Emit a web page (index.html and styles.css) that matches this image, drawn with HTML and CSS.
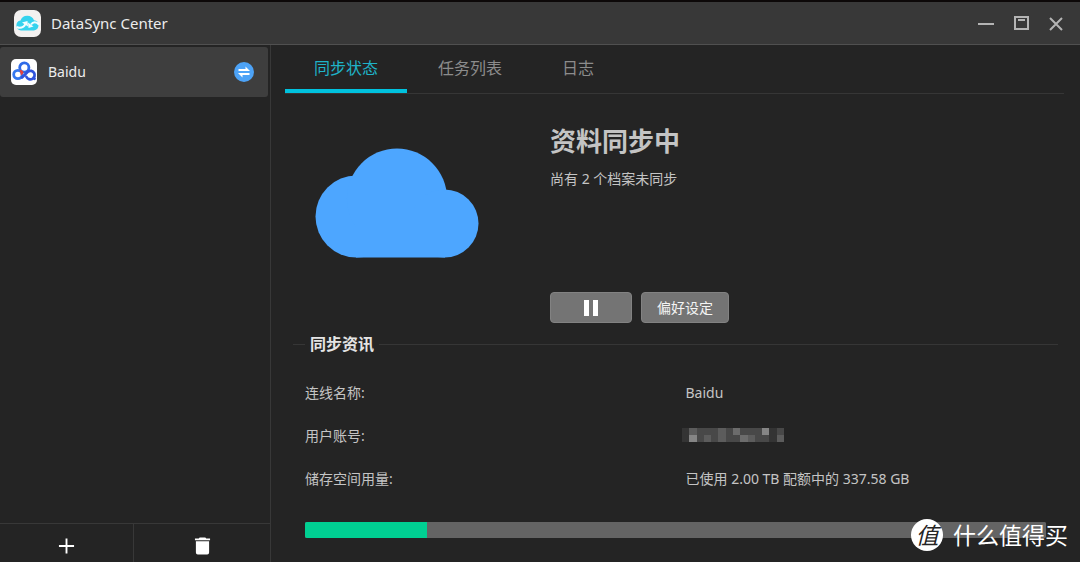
FILE: index.html
```html
<!DOCTYPE html>
<html lang="zh-CN">
<head>
<meta charset="utf-8">
<title>DataSync Center</title>
<link rel="stylesheet" href="styles.css">
</head>
<body>
<div class="window">
  <header class="titlebar">
    <svg class="app-icon" viewBox="0 0 27 27" aria-hidden="true">
      <rect width="27" height="27" rx="7" fill="#f3f1f0"/>
      <path d="M7 20.500a5 5 0 0 1-.5-9.900A7.200 7.200 0 0 1 20 10.200A5.200 5.200 0 0 1 20 20.500z" fill="#35d3ee"/>
      <path d="M2.500 17c3.500 1.500 7 .5 9-3" fill="none" stroke="#f3fdff" stroke-width="2"/>
      <path d="M8 12.500l5.500-1.500.5 5.500z" fill="#f3fdff"/>
      <path d="M25 14.500c-2.500-3-6-3-8 0" fill="none" stroke="#f3fdff" stroke-width="2"/>
      <path d="M14 12.500l.5 5.500 5-1.500z" fill="#f3fdff"/>
    </svg>
    <h1 class="app-title">DataSync Center</h1>
    <div class="window-controls">
      <button class="window-button" type="button" aria-label="Minimize"><svg viewBox="0 0 18 18"><path d="M1 10h16" stroke-width="2"/></svg></button>
      <button class="window-button" type="button" aria-label="Maximize"><svg viewBox="0 0 18 18"><path d="M3 3h13v12H3zM6 6h7" stroke-width="2"/></svg></button>
      <button class="window-button" type="button" aria-label="Close"><svg viewBox="0 0 18 18"><path d="M3 4l12 12M15 4L3 16" stroke-width="2"/></svg></button>
    </div>
  </header>

  <div class="body">
    <aside class="sidebar">
      <button class="connection" type="button">
        <svg class="connection-icon" viewBox="0 0 26 26" aria-hidden="true">
          <rect width="26" height="26" rx="5" fill="#fff"/>
          <g fill="none" stroke-width="2.800" stroke-linecap="round">
            <circle cx="13.300" cy="8.500" r="4.600" stroke="#2f6be8"/>
            <circle cx="6.900" cy="15.500" r="4.200" stroke="#3478ef"/>
            <path d="M15.500 18a4.300 4.300 0 1 0 1.500-5.500L11 18.500M22.500 18.500l1 1.200" stroke="#3053dc"/>
          </g>
          <path d="M8.600 10.800q3.500.5 4 2.700-1 2-2.600 3z" fill="#e8403c"/>
        </svg>
        <span class="connection-name">Baidu</span>
        <svg class="sync-badge" viewBox="0 0 20 20" aria-hidden="true">
          <circle cx="10" cy="10" r="10" fill="#4da3f7"/>
          <path d="M4.500 9h11.500L11.500 4.500V7h-7zM15.500 11H4l4.500 4.500V13h7z" fill="#fff"/>
        </svg>
      </button>
      <div class="sidebar-actions">
        <button class="sidebar-action" type="button" aria-label="新增"><svg viewBox="0 0 18 18"><path d="M8 1h2v7h7v2h-7v7H8v-7H1V8h7z"/></svg></button>
        <button class="sidebar-action" type="button" aria-label="删除"><svg viewBox="0 0 18 18"><path d="M1 1h4l1-1h6l1 1h4v2H1zM2 4h14v12q0 2-2 2H4q-2 0-2-2z"/></svg></button>
      </div>
    </aside>

    <main class="content">
      <nav class="tabs" role="tablist">
        <button class="tab tab-active" role="tab" aria-selected="true" type="button">同步状态</button>
        <button class="tab" role="tab" aria-selected="false" type="button">任务列表</button>
        <button class="tab" role="tab" aria-selected="false" type="button">日志</button>
      </nav>

      <section class="status">
        <svg class="cloud" viewBox="0 0 164 110" fill="#4da6ff" aria-hidden="true">
          <circle cx="41.500" cy="68.500" r="41"/>
          <circle cx="82" cy="50.500" r="50"/>
          <circle cx="129.500" cy="75.500" r="34"/>
          <path d="M41 60h89v49.500H41z"/>
        </svg>
        <div class="status-details">
          <h2 class="status-title">资料同步中</h2>
          <p class="status-text">尚有 2 个档案未同步</p>
          <div class="status-buttons">
            <button class="button button-pause" type="button" aria-label="暂停"><svg viewBox="0 0 14 16"><path d="M0 0h5v16H0zM9 0h5v16H9z"/></svg></button>
            <button class="button" type="button">偏好设定</button>
          </div>
        </div>
      </section>

      <fieldset class="info">
        <legend class="info-title">同步资讯</legend>
        <dl class="info-list">
          <dt>连线名称:</dt>
          <dd>Baidu</dd>
          <dt>用户账号:</dt>
          <dd>
            <svg class="masked" viewBox="0 0 14 2" preserveAspectRatio="none" shape-rendering="crispEdges" aria-hidden="true">
              <path fill="#484848" d="M0 0h14v2H0z"/>
              <path fill="#343434" d="M0 0h1v2H0zM12 0h1v2h-1z"/>
              <path fill="#5c5c5c" d="M1 0h1v1H1zM5 0h1v2H5zM3 1h1v1H3zM9 1h1v1H9zM13 1h1v1h-1z"/>
              <path fill="#6c6c6c" d="M7 0h1v1H7zM8 1h1v1H8z"/>
              <path fill="#858585" d="M1 1h1v1H1zM11 0h1v1h-1z"/>
            </svg>
          </dd>
          <dt>储存空间用量:</dt>
          <dd>已使用 2.00 TB 配额中的 337.58 GB</dd>
        </dl>
        <progress class="usage" max="2048" value="336" aria-label="储存空间用量"></progress>
      </fieldset>
    </main>
  </div>

  <div class="watermark">
    <span class="watermark-logo">值</span>
    <span>什么值得买</span>
  </div>
</div>
</body>
</html>
```
FILE: styles.css
```css
* {
  box-sizing: border-box;
}

body {
  margin: 0;
  background: #242424;
  color: #c4c4c4;
  font: 14px/20px "Noto Sans", "Noto Sans CJK SC", sans-serif;
}

button {
  margin: 0;
  padding: 0;
  border: 0;
  background: none;
  color: inherit;
  font: inherit;
}

.window {
  position: relative;
  display: flex;
  flex-direction: column;
  min-height: 100vh;
}

.titlebar {
  display: flex;
  align-items: center;
  height: 45px;
  padding: 0 15px 0 14px;
  border-top: 2px solid #0c0808;
  border-bottom: 1px solid #505050;
  background: #383838;
}

.app-icon {
  width: 27px;
  height: 27px;
}

.app-title {
  margin: 0 auto 0 10px;
  color: #ececec;
  font-size: 15px;
  font-weight: 400;
}

.window-controls {
  display: flex;
  gap: 17px;
}

.window-button {
  display: flex;
}

.window-button svg {
  width: 18px;
  height: 18px;
  fill: none;
  stroke: #b4b4b4;
}

.body {
  display: flex;
  flex: 1;
}

.sidebar {
  display: flex;
  flex-direction: column;
  flex: none;
  width: 271px;
  border-right: 1px solid #383838;
}

.connection {
  display: flex;
  align-items: center;
  height: 50px;
  margin: 2px 2px 0 0;
  padding: 0 14px 0 11px;
  border-radius: 3px;
  background: #3e3e3e;
}

.connection-icon {
  width: 26px;
  height: 26px;
}

.connection-name {
  margin: 0 auto 0 11px;
  color: #ececec;
  font-size: 14px;
}

.sync-badge {
  width: 20px;
  height: 20px;
}

.sidebar-actions {
  display: grid;
  grid-template-columns: 133fr 137fr;
  height: 39px;
  margin-top: auto;
  border-top: 1px solid #383838;
}

.sidebar-action {
  display: flex;
  align-items: center;
  justify-content: center;
  padding-top: 6px;
}

.sidebar-action + .sidebar-action {
  border-left: 1px solid #383838;
}

.sidebar-action svg {
  width: 17px;
  height: 18px;
  fill: #fff;
}

.content {
  flex: 1;
  min-width: 0;
  padding: 0 16px 16px 14px;
}

.tabs {
  display: flex;
  gap: 2px;
  height: 49px;
  border-bottom: 1px solid #363636;
}

.tab {
  height: 48px;
  padding: 2px 29px 0;
  border-bottom: 4px solid transparent;
  color: #8c8c8c;
  font-size: 16px;
}

.tab-active {
  border-color: #00c2de;
  color: #1fb3c8;
}

.status {
  display: flex;
  gap: 71px;
  padding: 29px 0 0 30px;
}

.cloud {
  flex: none;
  width: 164px;
  height: 110px;
  margin-top: 25px;
}

.status-details {
  display: flex;
  flex-direction: column;
  height: 200px;
}

.status-title {
  margin: 0;
  font-size: 26px;
  font-weight: 700;
  line-height: 36px;
}

.status-text {
  margin: 10px 0 0;
}

.status-buttons {
  display: flex;
  gap: 9px;
  margin-top: auto;
}

.button {
  display: flex;
  align-items: center;
  justify-content: center;
  height: 31px;
  padding: 0 15px;
  border: 1px solid #828282;
  border-radius: 4px;
  background: #747474;
  color: #f4f4f4;
}

.button-pause {
  width: 82px;
}

.button-pause svg {
  width: 14px;
  height: 16px;
  fill: #fff;
}

.info {
  margin: 9px 6px 0 8px;
  padding: 0 12px;
  border: 0 solid #363636;
  border-top-width: 1px;
}

.info-title {
  padding: 0 5px;
  color: #e4e4e4;
  font-size: 16px;
  font-weight: 700;
  line-height: 24px;
}

.info-list {
  display: grid;
  grid-template-columns: 1fr 1fr;
  row-gap: 23px;
  margin: 27px 0 33px;
}

.info-list dd {
  margin: 0;
  padding-left: 10px;
}

.masked {
  display: block;
  width: 102px;
  height: 14px;
  margin: 2px 0 0 -4px;
}

.usage {
  display: block;
  width: 100%;
  height: 16px;
  border: 0;
  border-radius: 2px;
  background: #646464;
  appearance: none;
}

.usage::-webkit-progress-bar {
  border-radius: 2px;
  background: #646464;
}

.usage::-webkit-progress-value {
  border-radius: 2px 0 0 2px;
  background: #00d092;
}

.watermark {
  position: absolute;
  right: 12px;
  bottom: 11px;
  display: flex;
  align-items: center;
  gap: 10px;
  color: #fff;
  font-size: 23px;
  line-height: 32px;
}

.watermark-logo {
  width: 32px;
  height: 32px;
  border-radius: 50%;
  background: #fff;
  color: #242424;
  font-style: italic;
  text-align: center;
}
```
